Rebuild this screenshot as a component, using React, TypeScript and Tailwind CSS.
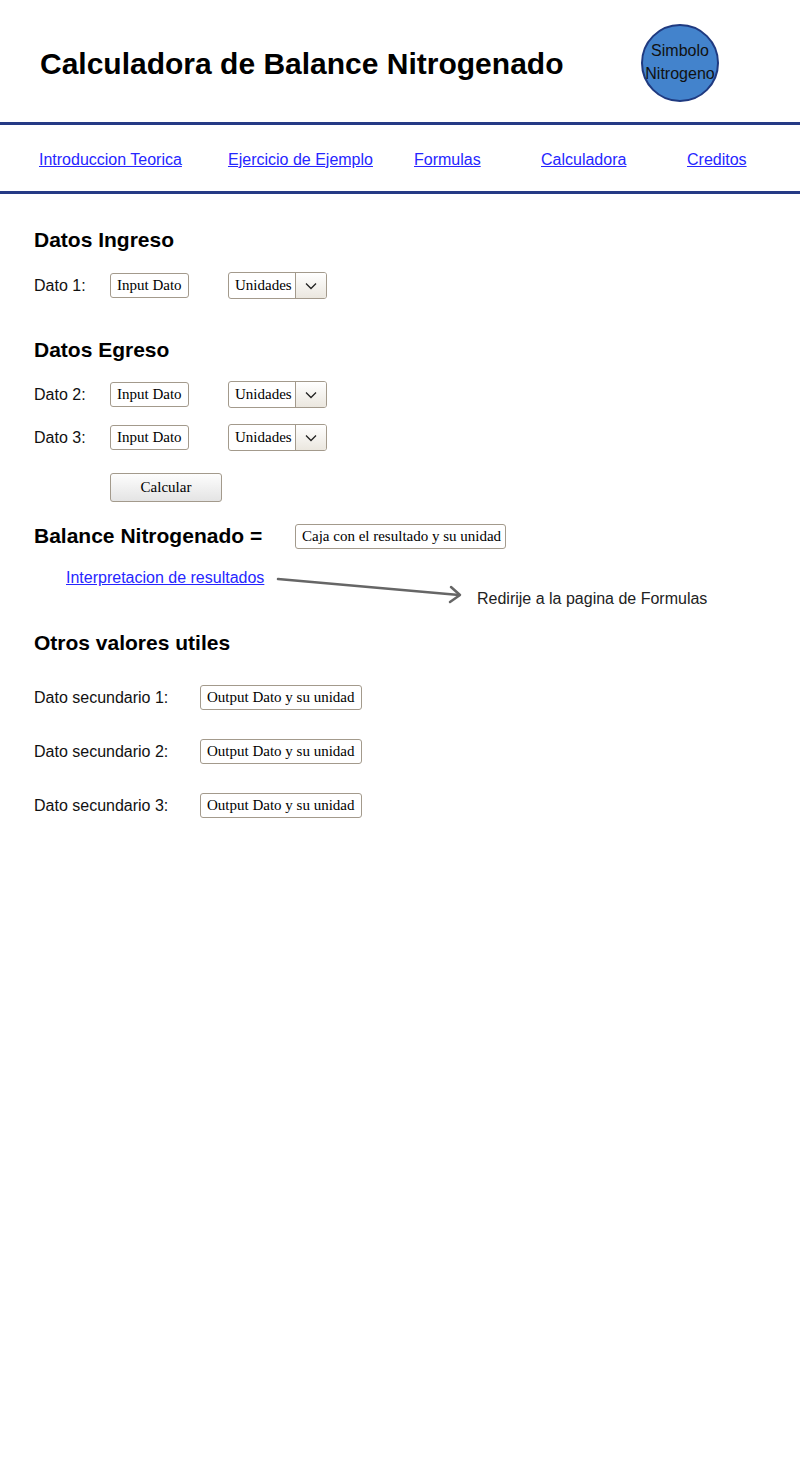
import React from 'react'

const sans = { fontFamily: '"Liberation Sans", Arial, sans-serif' }

const navLinks = [
  { name: 'Introduccion Teorica', w: 'w-[189px]' },
  { name: 'Ejercicio de Ejemplo', w: 'w-[186px]' },
  { name: 'Formulas', w: 'w-[127px]' },
  { name: 'Calculadora', w: 'w-[146px]' },
  { name: 'Creditos', w: 'w-[80px]' },
]

const Box = ({ text, className }: { text: string; className: string }) => (
  <div
    className={`flex items-center rounded-[3px] border border-[#a39a8c] bg-white px-[6px] font-['Liberation_Serif',serif] text-[15px] text-black whitespace-nowrap ${className}`}
  >
    {text}
  </div>
)

const Select = () => (
  <div className="flex h-[27px] w-[99px] overflow-hidden rounded-[3px] border border-[#a39a8c] bg-white">
    <div className="flex flex-1 items-center pl-[6px] font-['Liberation_Serif',serif] text-[15px] text-black pb-[1px]">
      Unidades
    </div>
    <div className="flex w-[31px] items-center justify-center border-l border-[#a39a8c] bg-gradient-to-b from-white to-[#ebe7df]">
      <svg width="12" height="8" viewBox="0 0 12 8" fill="none">
        <path d="M1 1.5 L6 6.5 L11 1.5" stroke="#222" strokeWidth="1.3" />
      </svg>
    </div>
  </div>
)

const DatoRow = ({ label, className }: { label: string; className: string }) => (
  <div className={`flex h-[27px] items-center ${className}`}>
    <span className="w-[76px] text-[16px] text-[#111]">{label}</span>
    <Box text="Input Dato" className="h-[25px] w-[79px]" />
    <div className="ml-[39px]">
      <Select />
    </div>
  </div>
)

const SecRow = ({ label, className }: { label: string; className: string }) => (
  <div className={`flex h-[25px] items-center ${className}`}>
    <span className="w-[166px] text-[16px] text-[#111]">{label}</span>
    <Box text="Output Dato y su unidad" className="h-[25px] w-[162px]" />
  </div>
)

export default function App() {
  return (
    <div className="min-h-screen w-full bg-white" style={sans}>
      <header className="flex h-[122px] items-center justify-between pl-[40px] pr-[81px] pt-[4px]">
        <h1 className="text-[30px] font-bold text-black">Calculadora de Balance Nitrogenado</h1>
        <div className="flex h-[78px] w-[78px] flex-col items-center justify-center rounded-full border-2 border-[#1f3a80] bg-[#4383cc] pb-[2px] text-[16px] leading-[23px] text-[#111]">
          <span>Simbolo</span>
          <span>Nitrogeno</span>
        </div>
      </header>
      <div className="h-[3px] bg-[#253a85]" />
      <nav className="flex h-[66px] items-center pl-[39px] pt-[4px]">
        {navLinks.map(({ name, w }) => (
          <div key={name} className={w}>
            <a href="#" className="text-[16px] text-[#2626ff] underline">
              {name}
            </a>
          </div>
        ))}
      </nav>
      <div className="h-[3px] bg-[#253a85]" />

      <main className="flex flex-col pl-[34px]">
        <h2 className="mt-[34px] h-[24px] text-[21px] font-bold leading-[24px] text-black">Datos Ingreso</h2>
        <DatoRow label="Dato 1:" className="mt-[20px]" />

        <h2 className="mt-[39px] h-[24px] text-[21px] font-bold leading-[24px] text-black">Datos Egreso</h2>
        <DatoRow label="Dato 2:" className="mt-[19px]" />
        <DatoRow label="Dato 3:" className="mt-[16px]" />

        <button className="ml-[76px] mt-[22px] h-[29px] w-[112px] rounded-[3px] border border-[#a39a8c] bg-gradient-to-b from-[#fdfdfd] to-[#e4e4e4] font-['Liberation_Serif',serif] text-[15px] text-black">
          Calcular
        </button>

        <div className="mt-[21px] flex h-[26px] items-center">
          <span className="w-[261px] text-[21px] font-bold text-black">Balance Nitrogenado =</span>
          <Box text="Caja con el resultado y su unidad" className="h-[25px] w-[211px]" />
        </div>

        <div className="mt-[20px] flex items-start">
          <div className="ml-[32px] w-[201px] whitespace-nowrap text-[16px] leading-[18px]">
            <a href="#" className="text-[#2626ff] underline">
              Interpretacion de resultados
            </a>
          </div>
          <svg className="ml-[5px]" width="194" height="36" viewBox="0 0 194 36" fill="none">
            <path d="M6 10 L187 26" stroke="#666" strokeWidth="2.5" strokeLinecap="round" />
            <path d="M179 18 L188 26 L178 33" stroke="#666" strokeWidth="2.5" strokeLinecap="round" strokeLinejoin="round" />
          </svg>
          <span className="ml-[11px] mt-[21px] text-[16px] leading-[18px] text-[#222]">
            Redirije a la pagina de Formulas
          </span>
        </div>

        <h2 className="mt-[23px] h-[24px] text-[21px] font-bold leading-[24px] text-black">Otros valores utiles</h2>
        <SecRow label="Dato secundario 1:" className="mt-[30px]" />
        <SecRow label="Dato secundario 2:" className="mt-[29px]" />
        <SecRow label="Dato secundario 3:" className="mt-[29px]" />
      </main>
    </div>
  )
}
